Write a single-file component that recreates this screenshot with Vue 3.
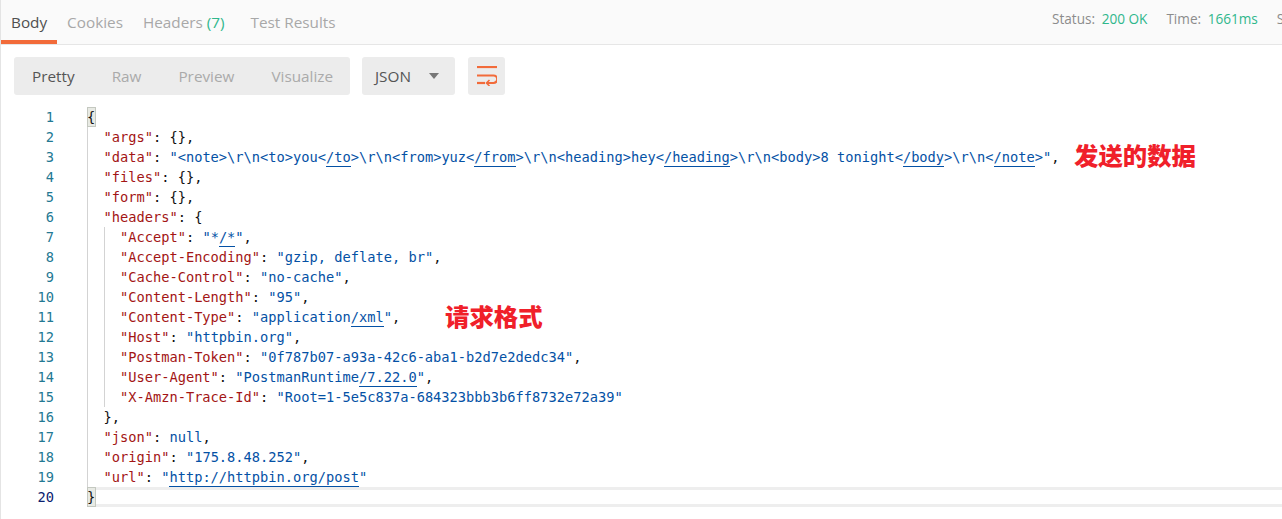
<script setup>
const source = [
  '{',
  '  "args": {},',
  '  "data": "<note>\\r\\n<to>you<[/to]>\\r\\n<from>yuz<[/from]>\\r\\n<heading>hey<[/heading]>\\r\\n<body>8 tonight<[/body]>\\r\\n<[/note]>",',
  '  "files": {},',
  '  "form": {},',
  '  "headers": {',
  '    "Accept": "*[/*]",',
  '    "Accept-Encoding": "gzip, deflate, br",',
  '    "Cache-Control": "no-cache",',
  '    "Content-Length": "95",',
  '    "Content-Type": "application[/xml]",',
  '    "Host": "httpbin.org",',
  '    "Postman-Token": "0f787b07-a93a-42c6-aba1-b2d7e2dedc34",',
  '    "User-Agent": "PostmanRuntime[/7.22.0]",',
  '    "X-Amzn-Trace-Id": "Root=1-5e5c837a-684323bbb3b6ff8732e72a39"',
  '  },',
  '  "json": null,',
  '  "origin": "175.8.48.252",',
  '  "url": "[http://httpbin.org/post]"',
  '}'
]

function tokenize(text) {
  const tokens = []
  const match = text.match(/^(\s*)("[^"]+")(: )(.*)$/)
  if (!match) return [{ cls: 'plain', text }]
  tokens.push({ cls: 'plain', text: match[1] })
  tokens.push({ cls: 'key', text: match[2] })
  tokens.push({ cls: 'plain', text: match[3] })
  const rest = match[4]
  if (rest.startsWith('"') || rest.startsWith('null')) {
    const tail = rest.match(/,$/) ? ',' : ''
    const body = tail ? rest.slice(0, -1) : rest
    body.split(/(\[[^\]]+\])/).forEach((part) => {
      if (!part) return
      if (part.startsWith('[')) tokens.push({ cls: 'link', text: part.slice(1, -1) })
      else tokens.push({ cls: 'str', text: part })
    })
    if (tail) tokens.push({ cls: 'plain', text: tail })
  } else {
    tokens.push({ cls: 'plain', text: rest })
  }
  return tokens
}

const lines = source.map((text, i) => ({
  no: i + 1,
  tokens: tokenize(text),
  rowClass: {
    guide: i > 0 && i < 19,
    guide2: i >= 6 && i <= 14,
    current: i === 19
  }
}))
</script>

<template>
  <div class="page">
    <header class="tabs">
      <nav class="tab-list">
        <span class="tab active">Body</span>
        <span class="tab">Cookies</span>
        <span class="tab">Headers <em class="count">(7)</em></span>
        <span class="tab">Test Results</span>
      </nav>
      <div class="meta">
        <span class="meta-item">Status: <b>200 OK</b></span>
        <span class="meta-item">Time: <b>1661ms</b></span>
        <span class="meta-item">S</span>
      </div>
    </header>

    <section class="toolbar">
      <div class="modes">
        <span class="mode on">Pretty</span>
        <span class="mode">Raw</span>
        <span class="mode">Preview</span>
        <span class="mode">Visualize</span>
      </div>
      <div class="format">
        <span>JSON</span>
        <i class="caret"></i>
      </div>
      <div class="wrap">
        <svg width="20" height="20" viewBox="0 0 20 20" fill="none" stroke="#f26b3a" stroke-width="2.2">
          <path d="M0 1H20" />
          <path d="M0 9.5H16.5A3.5 3.5 0 0 1 16.5 17H10" />
          <path d="M0 17H8" />
          <path d="M12.5 14L9.5 17L12.5 20" stroke-width="1.6" />
        </svg>
      </div>
    </section>

    <section class="code">
      <div v-for="line in lines" :key="line.no" class="line">
        <span class="no" :class="{ 'no-current': line.no === 20 }">{{ line.no }}</span>
        <span class="text" :class="line.rowClass">
          <span v-if="line.no === 1 || line.no === 20" class="match">{{ line.no === 1 ? '{' : '}' }}</span>
          <template v-else>
            <span v-for="(t, i) in line.tokens" :key="i" :class="t.cls">{{ t.text }}</span>
          </template>
        </span>
      </div>
      <span class="note note-data">发送的数据</span>
      <span class="note note-type">请求格式</span>
    </section>
  </div>
</template>

<style scoped>
.page {
  width: 1282px;
  height: 519px;
  overflow: hidden;
  box-sizing: border-box;
  border-left: 1px solid #e4e4e4;
  background: #fff;
  font-family: "Open Sans", "Noto Sans", sans-serif;
  position: relative;
}
.tabs {
  height: 45px;
  box-sizing: border-box;
  background: #fafafa;
  border-bottom: 1px solid #e6e6e6;
  display: flex;
  justify-content: space-between;
}
.tab-list {
  display: flex;
}
.tab {
  padding: 0 10px;
  font-size: 15.3px;
  line-height: 44px;
  color: #a8a8a8;
  white-space: nowrap;
  height: 44px;
  box-sizing: border-box;
}
.tab:nth-child(3) { margin-right: 6px; }
.tab.active {
  color: #505050;
  border-bottom: 4px solid #f26b3a;
}
.count {
  font-style: normal;
  color: #2fb78c;
}
.meta {
  display: flex;
  gap: 19px;
  font-size: 13.6px;
  line-height: 38px;
  color: #8c8c8c;
  white-space: nowrap;
  width: 230px;
  flex: none;
  overflow: hidden;
}
.meta b {
  font-weight: 400;
  color: #2fb78c;
  margin-left: 3px;
}
.toolbar {
  display: flex;
  height: 38px;
  margin: 12px 0 0 13px;
}
.modes {
  width: 336px;
  background: #ececec;
  border-radius: 3px;
  display: flex;
  align-items: center;
  padding-left: 18px;
  box-sizing: border-box;
  gap: 37px;
}
.mode {
  font-size: 15.3px;
  color: #aaa;
}
.mode.on { color: #555; }
.format {
  width: 93px;
  margin-left: 12px;
  background: #ececec;
  border-radius: 3px;
  display: flex;
  align-items: center;
  box-sizing: border-box;
  padding-left: 13px;
  font-size: 15.3px;
  color: #555;
}
.caret {
  margin-left: 18px;
  border-left: 5px solid transparent;
  border-right: 5px solid transparent;
  border-top: 6px solid #777;
}
.wrap {
  width: 37px;
  margin-left: 13px;
  background: #ececec;
  border-radius: 3px;
  display: flex;
  align-items: center;
  justify-content: center;
}
.code {
  margin-top: 12px;
  font-family: "DejaVu Sans Mono", "Liberation Mono", monospace;
  font-size: 13.7px;
  line-height: 20px;
}
.line {
  display: flex;
  height: 20px;
}
.no {
  width: 53px;
  flex: none;
  text-align: right;
  color: #237893;
  margin-right: 33px;
}
.no-current { color: #0b216f; }
.text {
  flex: 1;
  white-space: pre;
  color: #111;
}
.guide {
  background: linear-gradient(#d3d3d3, #d3d3d3) 0 0 / 1px 100% no-repeat;
}
.guide2 {
  background:
    linear-gradient(#d3d3d3, #d3d3d3) 0 0 / 1px 100% no-repeat,
    linear-gradient(#d3d3d3, #d3d3d3) 17px 0 / 1px 100% no-repeat;
}
.current {
  box-shadow: inset 0 3px 0 #eee, inset 0 -3px 0 #eee;
}
.match {
  display: inline-block;
  width: 9px;
  height: 20px;
  background: #e8eae4;
  box-shadow: inset 0 0 0 1px #c4c8c0;
}
.key { color: #a31515; }
.str { color: #0451a5; }
.link {
  color: #0451a5;
  border-bottom: 1px solid #0451a5;
  padding-bottom: 1px;
}
.note {
  position: absolute;
  font-family: "Noto Sans CJK SC", sans-serif;
  font-weight: 900;
  font-size: 24.4px;
  line-height: 30px;
  color: #f0202a;
  white-space: nowrap;
}
.note-data { left: 1073px; top: 140px; }
.note-type { left: 444px; top: 301px; }
</style>

<style>
html, body { margin: 0; background: #fff; overflow: hidden; }
</style>
